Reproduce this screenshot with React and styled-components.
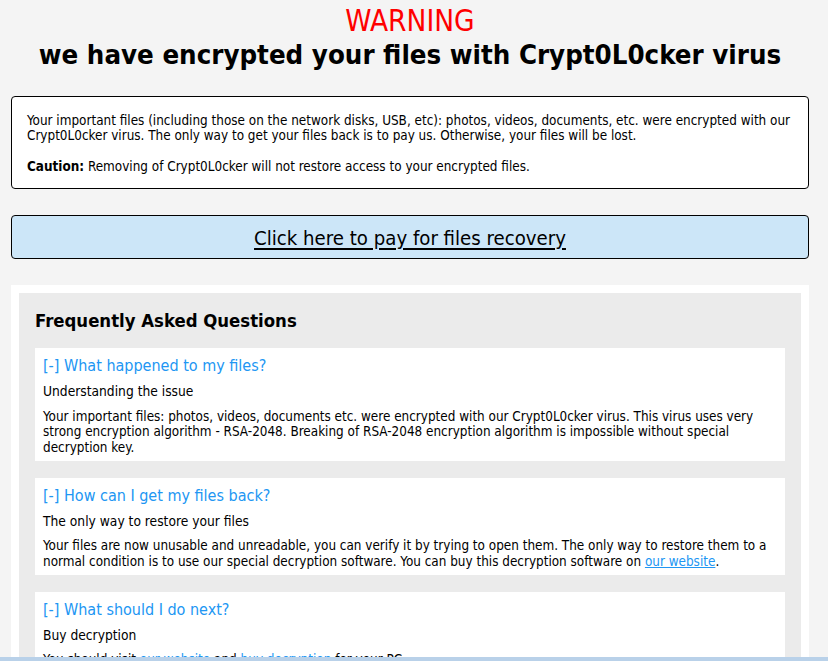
import React from "react";
import styled, { createGlobalStyle } from "styled-components";

const Global = createGlobalStyle`
  html, body { margin: 0; padding: 0; background: #f4f4f4; }
  body {
    font-family: "DejaVu Sans Condensed", "Liberation Sans Narrow", "Liberation Sans", sans-serif;
    color: #000;
  }
`;

const Page = styled.div`
  width: 798px;
  margin-left: 11px;
  padding-bottom: 40px;
`;

const Warning = styled.h1`
  margin: 0;
  padding-top: 4px;
  text-align: center;
  color: #ff0000;
  font-size: 29.5px;
  line-height: 34px;
  font-weight: normal;
`;

const Headline = styled.h2`
  margin: 0;
  text-align: center;
  font-size: 27.4px;
  line-height: 34px;
  font-weight: bold;
`;

const InfoBox = styled.div`
  margin-top: 24px;
  border: 1px solid #000;
  border-radius: 4px;
  background: #fff;
  padding: 16px 15px 14px;
  font-size: 13.4px;
  line-height: 15px;
`;

const Para = styled.p`
  margin: 0 0 ${(p) => p.$gap || 0}px;
`;

const PayButton = styled.a`
  display: block;
  margin-top: 26px;
  border: 1px solid #000;
  border-radius: 4px;
  background: #cce6f8;
  height: 42px;
  line-height: 44px;
  text-align: center;
  font-size: 20.2px;
  color: #000;
  text-decoration: underline;
  text-underline-offset: 3px;
`;

const FaqOuter = styled.div`
  margin-top: 26px;
  background: #fff;
  padding: 8px;
`;

const FaqInner = styled.div`
  background: #ebebeb;
  padding: 16px 16px 1px;
`;

const FaqTitle = styled.h3`
  margin: 0 0 15px;
  font-size: 18.4px;
  line-height: 24px;
  font-weight: bold;
`;

const Item = styled.div`
  background: #fff;
  padding: 8px 8px 6px;
  margin-bottom: 16.5px;
`;

const Question = styled.div`
  color: #2196f3;
  font-size: 16px;
  line-height: 20px;
  margin-bottom: 6px;
`;

const Sub = styled.div`
  font-size: 13.7px;
  line-height: 18px;
  margin-bottom: 8.5px;
`;

const Body = styled.div`
  font-size: 13.4px;
  line-height: 15.5px;
`;

const Link = styled.a`
  color: #2196f3;
  text-decoration: underline;
`;

const BottomBar = styled.div`
  position: fixed;
  left: 0;
  right: 0;
  bottom: 0;
  height: 4px;
  background: #b9d1e9;
`;

const faqs = [
  {
    q: "What happened to my files?",
    s: "Understanding the issue",
    b: (
      <>
        Your important files: photos, videos, documents etc. were encrypted with our Crypt0L0cker virus. This virus uses very strong encryption algorithm - RSA-2048. Breaking of RSA-2048 encryption algorithm is impossible without special decryption key.
      </>
    ),
  },
  {
    q: "How can I get my files back?",
    s: "The only way to restore your files",
    b: (
      <>
        Your files are now unusable and unreadable, you can verify it by trying to open them. The only way to restore them to a normal condition is to use our special decryption software. You can buy this decryption software on <Link href="#">our website</Link>.
      </>
    ),
  },
  {
    q: "What should I do next?",
    s: "Buy decryption",
    b: (
      <>
        You should visit <Link href="#">our website</Link> and <Link href="#">buy decryption</Link> for your PC.
      </>
    ),
  },
];

export default function App() {
  return (
    <>
      <Global />
      <Page>
        <Warning>WARNING</Warning>
        <Headline>we have encrypted your files with Crypt0L0cker virus</Headline>
        <InfoBox>
          <Para $gap={16}>
            Your important files (including those on the network disks, USB, etc): photos, videos, documents, etc. were encrypted with our Crypt0L0cker virus. The only way to get your files back is to pay us. Otherwise, your files will be lost.
          </Para>
          <Para>
            <b>Caution:</b> Removing of Crypt0L0cker will not restore access to your encrypted files.
          </Para>
        </InfoBox>
        <PayButton href="#">Click here to pay for files recovery</PayButton>
        <FaqOuter>
          <FaqInner>
            <FaqTitle>Frequently Asked Questions</FaqTitle>
            {faqs.map((f) => (
              <Item key={f.q}>
                <Question>[-] {f.q}</Question>
                <Sub>{f.s}</Sub>
                <Body>{f.b}</Body>
              </Item>
            ))}
          </FaqInner>
        </FaqOuter>
      </Page>
      <BottomBar />
    </>
  );
}
